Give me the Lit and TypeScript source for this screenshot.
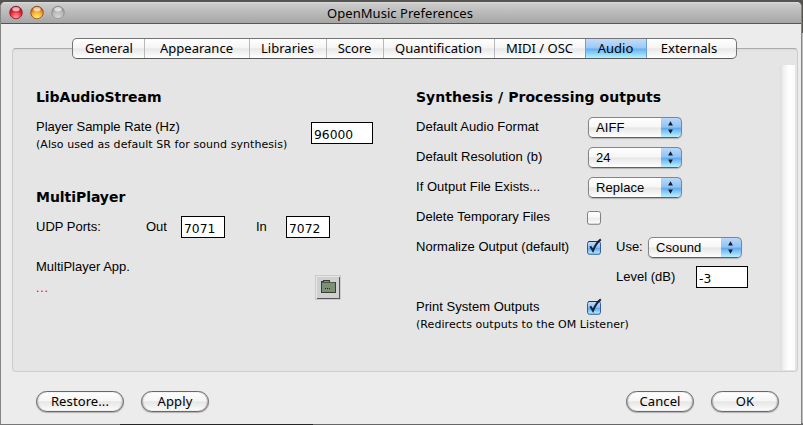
import { LitElement, html, css, svg } from "lit";
import { customElement, property } from "lit/decorators.js";
import { classMap } from "lit/directives/class-map.js";

@customElement("pref-select")
class PrefSelect extends LitElement {
  @property() value = "";
  static styles = css`
    :host { display: block; width: 94px; height: 21px; flex: none; }
    .box {
      box-sizing: border-box; display: flex; width: 94px; height: 21px; overflow: hidden;
      border: 1px solid #858585; border-bottom-color: #5f5f5f; border-radius: 5px;
      background: linear-gradient(#fff 0%, #f6f6f6 48%, #e6e6e6 52%, #fff 100%);
      box-shadow: 0 1px 1px rgba(0, 0, 0, .22);
      font: 13px/19px "Liberation Sans", Arial, sans-serif; letter-spacing: .1px; color: #000;
    }
    .text { flex: 1; padding-left: 7px; }
    .arrows {
      width: 20px; height: 20px; margin: -1px -1px 0 0; border-top: 1px solid #2a1c9c; border-right: 1px solid #3b57ae;
      border-radius: 0 5px 5px 0;
      background: linear-gradient(#b9d8f8 0%, #8fc3f5 45%, #62aaf0 52%, #a6e3fc 85%, #bdf6ff 100%);
    }
    svg { display: block; }
  `;
  render() {
    return html`<div class="box"><span class="text">${this.value}</span><span class="arrows">
      <svg width="20" height="19" viewBox="0 0 20 19"><path d="M9.5 3.3 11.9 7.6H7.1zM9.5 15.7 7.1 11.400h4.8z" fill="#111c2c"/></svg>
    </span></div>`;
  }
}

@customElement("pref-check")
class PrefCheck extends LitElement {
  @property({ type: Boolean }) checked = false;
  static styles = css`
    :host { display: block; width: 16px; height: 18px; flex: none; }
    svg { display: block; overflow: visible; }
  `;
  render() {
    const on = this.checked;
    return html`<svg width="16" height="18" viewBox="0 0 16 18">
      <defs>
        <linearGradient id="g" x2="0" y2="1">
          <stop offset="0" stop-color=${on ? "#c6defa" : "#fff"}/>
          <stop offset=".45" stop-color=${on ? "#93c3f5" : "#f7f7f7"}/>
          <stop offset=".55" stop-color=${on ? "#64abf0" : "#ececec"}/>
          <stop offset="1" stop-color=${on ? "#b5f4ff" : "#fff"}/>
        </linearGradient>
      </defs>
      <rect x="1.5" y="4" width="13" height="13" rx="2.5" fill="#000" opacity=".16"/>
      <rect x="1.5" y="3.5" width="13" height="12.7" rx="2" fill="url(#g)" stroke=${on ? "#3a5c9c" : "#808080"}/>
      ${on ? svg`<path d="M2.5 3.5h11" stroke="#2a1c9c"/>
        <path d="M4.3 8.2 7 12.6C9 7.6 11.6 3.8 14.8 1.4" fill="none" stroke="#16243c" stroke-width="2.1"/>` : ""}
    </svg>`;
  }
}

@customElement("pref-button")
class PrefButton extends LitElement {
  @property() label = "";
  static styles = css`
    :host { display: block; }
    .btn {
      box-sizing: border-box; height: 21px; border: 1px solid #686868; border-radius: 11px; text-align: center;
      background: linear-gradient(#fff 0%, #f5f5f5 46%, #e6e6e6 52%, #fdfdfd 100%);
      box-shadow: 0 1px 1px rgba(0, 0, 0, .25), inset 1px 0 1px rgba(0, 0, 0, .25), inset -1px 0 1px rgba(0, 0, 0, .25);
      font: 13px/19px "Noto Sans", sans-serif; letter-spacing: .1px; color: #000;
    }
  `;
  render() {
    return html`<div class="btn">${this.label}</div>`;
  }
}

const TABS = ["General", "Appearance", "Libraries", "Score", "Quantification", "MIDI / OSC", "Audio", "Externals"];

@customElement("app-root")
class AppRoot extends LitElement {
  static styles = css`
    :host {
      display: block; width: 803px; height: 425px; overflow: hidden; box-sizing: border-box; padding: 2px 1px 1px 0;
      background: linear-gradient(#55534f, #55534f) 0 0 / 100% 33px no-repeat,
        linear-gradient(90deg, #777 0 120px, #252525 120px 313px, #666 313px) 0 100% / 100% 2px no-repeat, #bdbdbd;
      font: 13px/18px "Liberation Sans", Arial, sans-serif; color: #000;
    }
    .window {
      box-sizing: border-box; width: 802px; height: 422px; border: 1px solid #858585; border-top: 0; border-bottom: 0;
      border-radius: 5px 5px 0 0; background: #ececec; overflow: hidden; display: flex; flex-direction: column;
    }
    .titlebar {
      box-sizing: border-box; height: 22px; flex: none; display: grid; grid-template-columns: 70px 1fr 72px; align-items: center;
      border-bottom: 1px solid #555; background: linear-gradient(#dcdcdc 0, #cacaca 2px, #a6a6a6 100%);
      font: 13px/20px "Noto Sans", sans-serif;
    }
    .lights { display: flex; gap: 7px; padding-left: 8px; }
    .lights svg { display: block; }
    .title { text-align: center; letter-spacing: .05px; }
    .tabs {
      position: relative; z-index: 1; box-sizing: border-box; display: grid;
      grid-template-columns: 71px 105px 77px 57px 111px 91px 61px 90px;
      width: 665px; height: 21px; margin: 14px 0 0 71px; flex: none;
      border: 1px solid #747474; border-bottom-color: #5a5a5a; border-radius: 5px; overflow: hidden;
      background: linear-gradient(#fff 0%, #f5f5f5 46%, #e8e8e8 52%, #fff 100%);
      font: 13px/18px "Noto Sans", sans-serif; text-align: center;
    }
    .tab { border-left: 1px solid #b9b9b9; white-space: nowrap; padding-right: 1px; }
    .tab:first-child { border-left: 0; padding: 0 0 0 1px; }
    .tab.active {
      margin-top: -1px; border-top: 1px solid #2f22a0; border-left-color: #6f9fd8;
      background: linear-gradient(#c3dcf8 0%, #9ccaf6 45%, #69b0f2 54%, #b5f6ff 100%);
    }
    .tab.after { border-left-color: #6f9fd8; padding-right: 5px; }
    .panel {
      box-sizing: border-box; width: 786px; height: 324px; margin: -11px 0 0 11px; flex: none; display: grid;
      grid-template-columns: 380px 387px 16px; padding: 16px 0 1px 0;
      border: 1px solid #cdcdcd; border-top-color: #aaa; border-radius: 4px;
      background: linear-gradient(#dcdcdc 0, #e5e5e5 3px);
    }
    .left { padding: 17px 0 0 23px; }
    .right { padding: 17px 0 0 23px; }
    .scroll { background: linear-gradient(90deg, #dcdcdc, #f1f1f1 25%, #fff 60%, #fbfbfb); width: 15px; }
    h2 { margin: 0; height: 30px; font: bold 14px/31px "DejaVu Sans", sans-serif; letter-spacing: .04px; white-space: nowrap; }
    .left h2 { letter-spacing: -.05px; }
    .row { height: 30px; display: flex; align-items: center; }
    .name { width: 170px; white-space: nowrap; letter-spacing: .03px; }
    .row pref-select { margin-top: 1px; }
    .name.wide { width: 172px; }
    .note { font: 11px/17px "DejaVu Sans", sans-serif; letter-spacing: .06px; white-space: nowrap; }
    .field {
      box-sizing: border-box; height: 22px; border: 1px solid #000; background: #fff; padding: 3px 0 0 2px;
      font: 12.3px/18px "DejaVu Sans", sans-serif; flex: none;
    }
    .rate { display: flex; height: 70px; }
    .rate .texts { width: 275px; padding-top: 6px; }
    .rate .field { margin-top: 10px; }
    .w62 { width: 62px; }
    .w44 { width: 44px; }
    .w52 { width: 52px; }
    .udp { width: 110px; }
    .out { width: 35px; }
    .in { width: 30px; margin-left: 31px; }
    .app { display: flex; margin-top: 16px; }
    .app .texts { width: 279px; }
    .dots { color: #f00; margin-top: 3px; letter-spacing: .6px; }
    .folder { display: block; margin-top: 17px; }
    .use { margin-left: 14px; width: 32px; white-space: nowrap; }
    .level { margin-left: 200px; width: 80px; }
    .redirect { margin-top: -6px; }
    .actions { display: grid; grid-template-columns: 88px 68px 1fr 68px 68px; column-gap: 17px; padding: 19px 22px 0 35px; }
  `;

  light(edge: string, main: string, glow: string, id: string) {
    return html`<svg width="14" height="15" viewBox="0 0 14 15">
      <defs>
        <radialGradient id=${id} cx=".5" cy=".85" r=".8">
          <stop offset="0" stop-color=${glow}/><stop offset=".6" stop-color=${main}/><stop offset="1" stop-color=${edge}/>
        </radialGradient>
      </defs>
      <circle cx="7" cy="8.2" r="6.500" fill="#fff" opacity=".35"/>
      <circle cx="7" cy="7.6" r="6.3" fill="url(#${id})" stroke=${edge} stroke-width=".9"/>
      <ellipse cx="7" cy="4.2" rx="3.6" ry="2.1" fill="#fff" opacity=".65"/>
    </svg>`;
  }

  render() {
    return html`
      <div class="window">
        <div class="titlebar">
          <div class="lights">
            ${this.light("#8d1620", "#ec2232", "#ffa6aa", "red")}
            ${this.light("#9a4a12", "#f7a324", "#fff27a", "amber")}
            ${this.light("#8a8a8a", "#b8b8b8", "#d4d4d4", "grey")}
          </div>
          <div class="title">OpenMusic Preferences</div>
        </div>
        <div class="tabs">
          ${TABS.map((t, i) => html`<div class=${classMap({ tab: true, active: t === "Audio", after: i === 7 })}>${t}</div>`)}
        </div>
        <div class="panel">
          <div class="left">
            <h2>LibAudioStream</h2>
            <div class="rate">
              <div class="texts">
                <div>Player Sample Rate (Hz)</div>
                <div class="note">(Also used as default SR for sound synthesis)</div>
              </div>
              <div class="field w62">96000</div>
            </div>
            <h2>MultiPlayer</h2>
            <div class="row">
              <span class="udp">UDP Ports:</span><span class="out">Out</span><div class="field w44">7071</div>
              <span class="in">In</span><div class="field w44">7072</div>
            </div>
            <div class="app">
              <div class="texts"><div>MultiPlayer App.</div><div class="dots">...</div></div>
              <svg class="folder" width="26" height="25" viewBox="0 0 26 25" shape-rendering="crispEdges">
                <rect width="26" height="25" fill="#cbcbcb"/>
                <path d="M1.5 23V1.5h23" fill="none" stroke="#e6e6e6"/>
                <rect x="2" y="2" width="22" height="21" fill="#d0d0d0"/>
                <path d="M2 23.5h22.5V2" fill="none" stroke="#555"/>
                <path d="M6.5 17.5v-11h1.500v-1h6v1h0v1h6.500v10z" fill="#7d9076" stroke="#35402f"/>
                <path d="M7 7.5h13" stroke="#4b5946"/>
                <path d="M10 13.5h1M12 13.5h1M14 13.5h1" stroke="#222"/>
              </svg>
            </div>
          </div>
          <div class="right">
            <h2>Synthesis / Processing outputs</h2>
            <div class="row"><span class="name wide">Default Audio Format</span><pref-select value="AIFF"></pref-select></div>
            <div class="row"><span class="name wide">Default Resolution (b)</span><pref-select value="24"></pref-select></div>
            <div class="row"><span class="name wide">If Output File Exists...</span><pref-select value="Replace"></pref-select></div>
            <div class="row"><span class="name">Delete Temporary Files</span><pref-check></pref-check></div>
            <div class="row"><span class="name">Normalize Output (default)</span><pref-check checked></pref-check>
              <span class="use">Use:</span><pref-select value="Csound"></pref-select></div>
            <div class="row"><span class="level">Level (dB)</span><div class="field w52">-3</div></div>
            <div class="row"><span class="name">Print System Outputs</span><pref-check checked></pref-check></div>
            <div class="note redirect">(Redirects outputs to the OM Listener)</div>
          </div>
          <div class="scroll"></div>
        </div>
        <div class="actions">
          <pref-button label="Restore..."></pref-button>
          <pref-button label="Apply"></pref-button>
          <span></span>
          <pref-button label="Cancel"></pref-button>
          <pref-button label="OK"></pref-button>
        </div>
      </div>`;
  }
}
